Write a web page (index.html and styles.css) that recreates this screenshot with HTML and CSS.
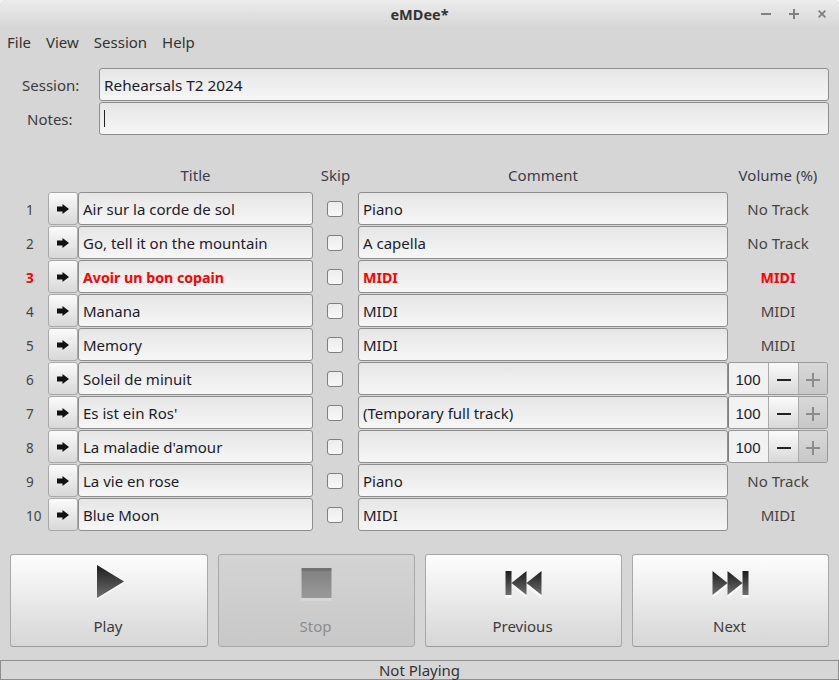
FILE: index.html
```html
<!DOCTYPE html>
<html lang="en">
<head>
<meta charset="utf-8">
<title>eMDee*</title>
<link rel="stylesheet" href="styles.css">
</head>
<body>
<svg class="defs" width="0" height="0" aria-hidden="true">
  <defs>
    <linearGradient id="dark" x1="0" y1="0" x2="0" y2="1"><stop offset="0" stop-color="#1c1c1c"/><stop offset="1" stop-color="#6e6e6e"/></linearGradient>
    <linearGradient id="dim" x1="0" y1="0" x2="0" y2="1"><stop offset="0" stop-color="#727272"/><stop offset=".1" stop-color="#727272"/><stop offset=".11" stop-color="#828282"/><stop offset="1" stop-color="#9a9a9a"/></linearGradient>
  </defs>
  <symbol id="arrow" viewBox="0 0 12 10"><path d="M0 2.600H5.500V0L12 5 5.500 10V7.400H0Z" fill="#111"/></symbol>
  <symbol id="minus" viewBox="0 0 14 14"><path d="M0 6H14V8H0Z"/></symbol>
  <symbol id="plus" viewBox="0 0 14 14"><path d="M6 0H8V6H14V8H8V14H6V8H0V6H6Z"/></symbol>
</svg>
<div class="window">
  <header class="titlebar">
    <span class="title">eMDee*</span>
    <div class="wm">
      <svg class="wm-icon" viewBox="0 0 10 10"><path d="M0 4H10V6H0Z"/></svg>
      <svg class="wm-icon" viewBox="0 0 10 10"><path d="M4 0H6V4H10V6H6V10H4V6H0V4H4Z"/></svg>
      <svg class="wm-icon" viewBox="0 0 10 10"><path d="M2.300 1 5 3.700 7.700 1 9 2.300 6.300 5 9 7.700 7.700 9 5 6.300 2.300 9 1 7.700 3.700 5 1 2.300Z"/></svg>
    </div>
  </header>
  <nav class="menubar"><span>File</span><span>View</span><span>Session</span><span>Help</span></nav>
  <section class="meta">
    <label class="meta-label session">Session:</label><div class="field">Rehearsals T2 2024</div>
    <label class="meta-label notes">Notes:</label><div class="field"><i class="caret"></i></div>
  </section>
  <section class="tracks">
    <div class="head"></div><div class="head"></div><div class="head">Title</div><div class="head">Skip</div><div class="head">Comment</div><div class="head">Volume (%)</div>

    <div class="num">1</div><button class="go"><svg><use href="#arrow"/></svg></button><div class="cell">Air sur la corde de sol</div><div class="skip"><i class="box"></i></div><div class="cell">Piano</div><div class="vol">No Track</div>
    <div class="num">2</div><button class="go"><svg><use href="#arrow"/></svg></button><div class="cell">Go, tell it on the mountain</div><div class="skip"><i class="box"></i></div><div class="cell">A capella</div><div class="vol">No Track</div>
    <div class="num hot">3</div><button class="go"><svg><use href="#arrow"/></svg></button><div class="cell hot">Avoir un bon copain</div><div class="skip"><i class="box"></i></div><div class="cell hot">MIDI</div><div class="vol hot">MIDI</div>
    <div class="num">4</div><button class="go"><svg><use href="#arrow"/></svg></button><div class="cell">Manana</div><div class="skip"><i class="box"></i></div><div class="cell">MIDI</div><div class="vol">MIDI</div>
    <div class="num">5</div><button class="go"><svg><use href="#arrow"/></svg></button><div class="cell">Memory</div><div class="skip"><i class="box"></i></div><div class="cell">MIDI</div><div class="vol">MIDI</div>
    <div class="num">6</div><button class="go"><svg><use href="#arrow"/></svg></button><div class="cell">Soleil de minuit</div><div class="skip"><i class="box"></i></div><div class="cell"></div><div class="spin"><span class="val">100</span><span class="dec"><svg><use href="#minus"/></svg></span><span class="inc"><svg><use href="#plus"/></svg></span></div>
    <div class="num">7</div><button class="go"><svg><use href="#arrow"/></svg></button><div class="cell">Es ist ein Ros'</div><div class="skip"><i class="box"></i></div><div class="cell">(Temporary full track)</div><div class="spin"><span class="val">100</span><span class="dec"><svg><use href="#minus"/></svg></span><span class="inc"><svg><use href="#plus"/></svg></span></div>
    <div class="num">8</div><button class="go"><svg><use href="#arrow"/></svg></button><div class="cell">La maladie d'amour</div><div class="skip"><i class="box"></i></div><div class="cell"></div><div class="spin"><span class="val">100</span><span class="dec"><svg><use href="#minus"/></svg></span><span class="inc"><svg><use href="#plus"/></svg></span></div>
    <div class="num">9</div><button class="go"><svg><use href="#arrow"/></svg></button><div class="cell">La vie en rose</div><div class="skip"><i class="box"></i></div><div class="cell">Piano</div><div class="vol">No Track</div>
    <div class="num">10</div><button class="go"><svg><use href="#arrow"/></svg></button><div class="cell">Blue Moon</div><div class="skip"><i class="box"></i></div><div class="cell">MIDI</div><div class="vol">MIDI</div>
  </section>
  <section class="actions">
    <button class="action"><svg class="ico" viewBox="0 0 40 40"><path d="M8 3 35 19 8 36Z" fill="#fff" opacity=".7" transform="translate(0 1)"/><path d="M8 2 35 18.500 8 35Z" fill="url(#dark)"/></svg><span>Play</span></button>
    <button class="action off"><svg class="ico" viewBox="0 0 40 40"><rect x="4.500" y="7" width="30" height="31" fill="#ddd" opacity=".6"/><rect x="4.500" y="5" width="30" height="30" fill="url(#dim)"/></svg><span>Stop</span></button>
    <button class="action"><svg class="ico" viewBox="0 0 40 40"><path d="M1.500 8H7.500V32H1.500ZM7.500 20 22.500 8V32ZM22.500 20 37.500 8V32Z" fill="#fff" opacity=".7" transform="translate(0 3)"/><path d="M1.500 8H7.500V32H1.500ZM7.500 20 22.500 8V32ZM22.500 20 37.500 8V32Z" fill="url(#dark)"/></svg><span>Previous</span></button>
    <button class="action"><svg class="ico" viewBox="0 0 40 40"><path d="M37.500 8H31.500V32H37.500ZM31.500 20 16.500 8V32ZM16.500 20 1.500 8V32Z" fill="#fff" opacity=".7" transform="translate(0 3)"/><path d="M37.500 8H31.500V32H37.500ZM31.500 20 16.500 8V32ZM16.500 20 1.500 8V32Z" fill="url(#dark)"/></svg><span>Next</span></button>
  </section>
  <footer class="status">Not Playing</footer>
</div>
</body>
</html>
```
FILE: styles.css
```css
* { box-sizing: border-box; }
html, body { margin: 0; padding: 0; background: #f4f4f4; }
body { font-family: "Noto Sans", sans-serif; font-size: 15px; color: #3c3c3c; }
.defs { position: absolute; }
.window {
  width: 839px; height: 680px; background: #d6d6d6; display: flex; flex-direction: column;
  border-radius: 6px 6px 0 0; overflow: hidden;
}
.titlebar {
  height: 28px; flex: none; display: flex; align-items: center; justify-content: center; position: relative;
  background: linear-gradient(#ececec, #d6d6d6);
}
.title { font-weight: 700; font-size: 14.5px; color: #333; }
.wm { position: absolute; right: 12px; top: 9px; display: flex; gap: 18px; }
.wm-icon { width: 10px; height: 10px; fill: #808080; display: block; }
.menubar { height: 30px; flex: none; display: flex; align-items: center; gap: 15px; padding: 0 0 2px 7px; color: #333; }
.meta { display: grid; grid-template-columns: 99px 730px; grid-auto-rows: 34px; margin-top: 10px; flex: none; }
.meta-label { display: flex; align-items: center; }
.session { padding-left: 22px; }
.notes { padding-left: 27px; }
.field, .cell {
  display: flex; align-items: center; padding-left: 4px; color: #1c1c2c; white-space: nowrap;
  border: 1px solid #8e8e8e; border-radius: 3px;
  background: linear-gradient(#e6e6e6, #f6f6f6);
}
.field { height: 33px; font-size: 15.3px; }
.caret { width: 1px; height: 17px; background: #222; }
.tracks {
  display: grid; grid-template-columns: 48px 30px 235px 45px 370px 100px; grid-template-rows: 33px repeat(10, 34px);
  margin-top: 23px; flex: none;
}
.head { display: flex; align-items: center; justify-content: center; color: #3c3c4c; padding-bottom: 1px; }
.num { display: flex; align-items: center; padding: 2px 0 0 26px; color: #444; font-size: 13.5px; }
.go {
  margin: 0; padding: 0; height: 33px; display: flex; align-items: center; justify-content: center;
  border: 1px solid #a8a8a8; border-radius: 3px; background: linear-gradient(#fbfbfb, #d8d8d8);
}
.go svg { width: 12px; height: 10px; display: block; }
.cell { height: 33px; }
.skip { display: flex; align-items: center; justify-content: center; padding-right: 1px; }
.box { width: 16px; height: 16px; border: 1px solid #808080; border-radius: 3px; background: linear-gradient(#ececec, #f8f8f8); }
.vol { display: flex; align-items: center; justify-content: center; color: #444; }
.hot { color: #f00; font-weight: 700; }
.cell.hot { font-size: 14.2px; padding-top: 1px; }
.vol.hot { font-size: 14.2px; }
.spin { display: flex; height: 33px; width: 100px; border: 1px solid #9a9a9a; border-left-color: #808080; border-radius: 3px; overflow: hidden; }
.val { width: 39px; display: flex; align-items: center; justify-content: center; padding: 2px 1px 0 0; background: #f2f2f2; color: #1c1c2c; font-family: "Liberation Sans", sans-serif; }
.dec, .inc { display: flex; align-items: center; justify-content: center; padding-top: 2px; border-left: 1px solid #aaa; }
.dec { width: 30px; background: linear-gradient(#fbfbfb, #d8d8d8); fill: #222; }
.inc { width: 29px; background: linear-gradient(#d8d8d8, #c8c8c8); fill: #8c8c8c; }
.dec svg, .inc svg { width: 14px; height: 14px; display: block; }
.actions { display: grid; grid-template-columns: 198px 197px 197px 197px; gap: 10px; padding-left: 10px; margin-top: 22px; flex: none; }
.action {
  margin: 0; height: 93px; padding: 0; font: inherit; color: #3c3c3c;
  display: flex; flex-direction: column; align-items: center; justify-content: flex-start;
  border: 1px solid #a8a8a8; border-bottom-color: #999; border-radius: 3px; background: linear-gradient(#fdfdfd, #d6d6d6);
}
.action.off { background: linear-gradient(#d4d4d4, #c8c8c8); border-color: #a8a8a8; color: #8c8c8c; }
.ico { width: 40px; height: 40px; margin-top: 8px; display: block; }
.action span { margin-top: 13px; padding-right: 2px; }
.status {
  margin-top: 13px; height: 20px; flex: none; display: flex; align-items: center; justify-content: center;
  border: 1px solid #8e8e8e; color: #333;
}
```
